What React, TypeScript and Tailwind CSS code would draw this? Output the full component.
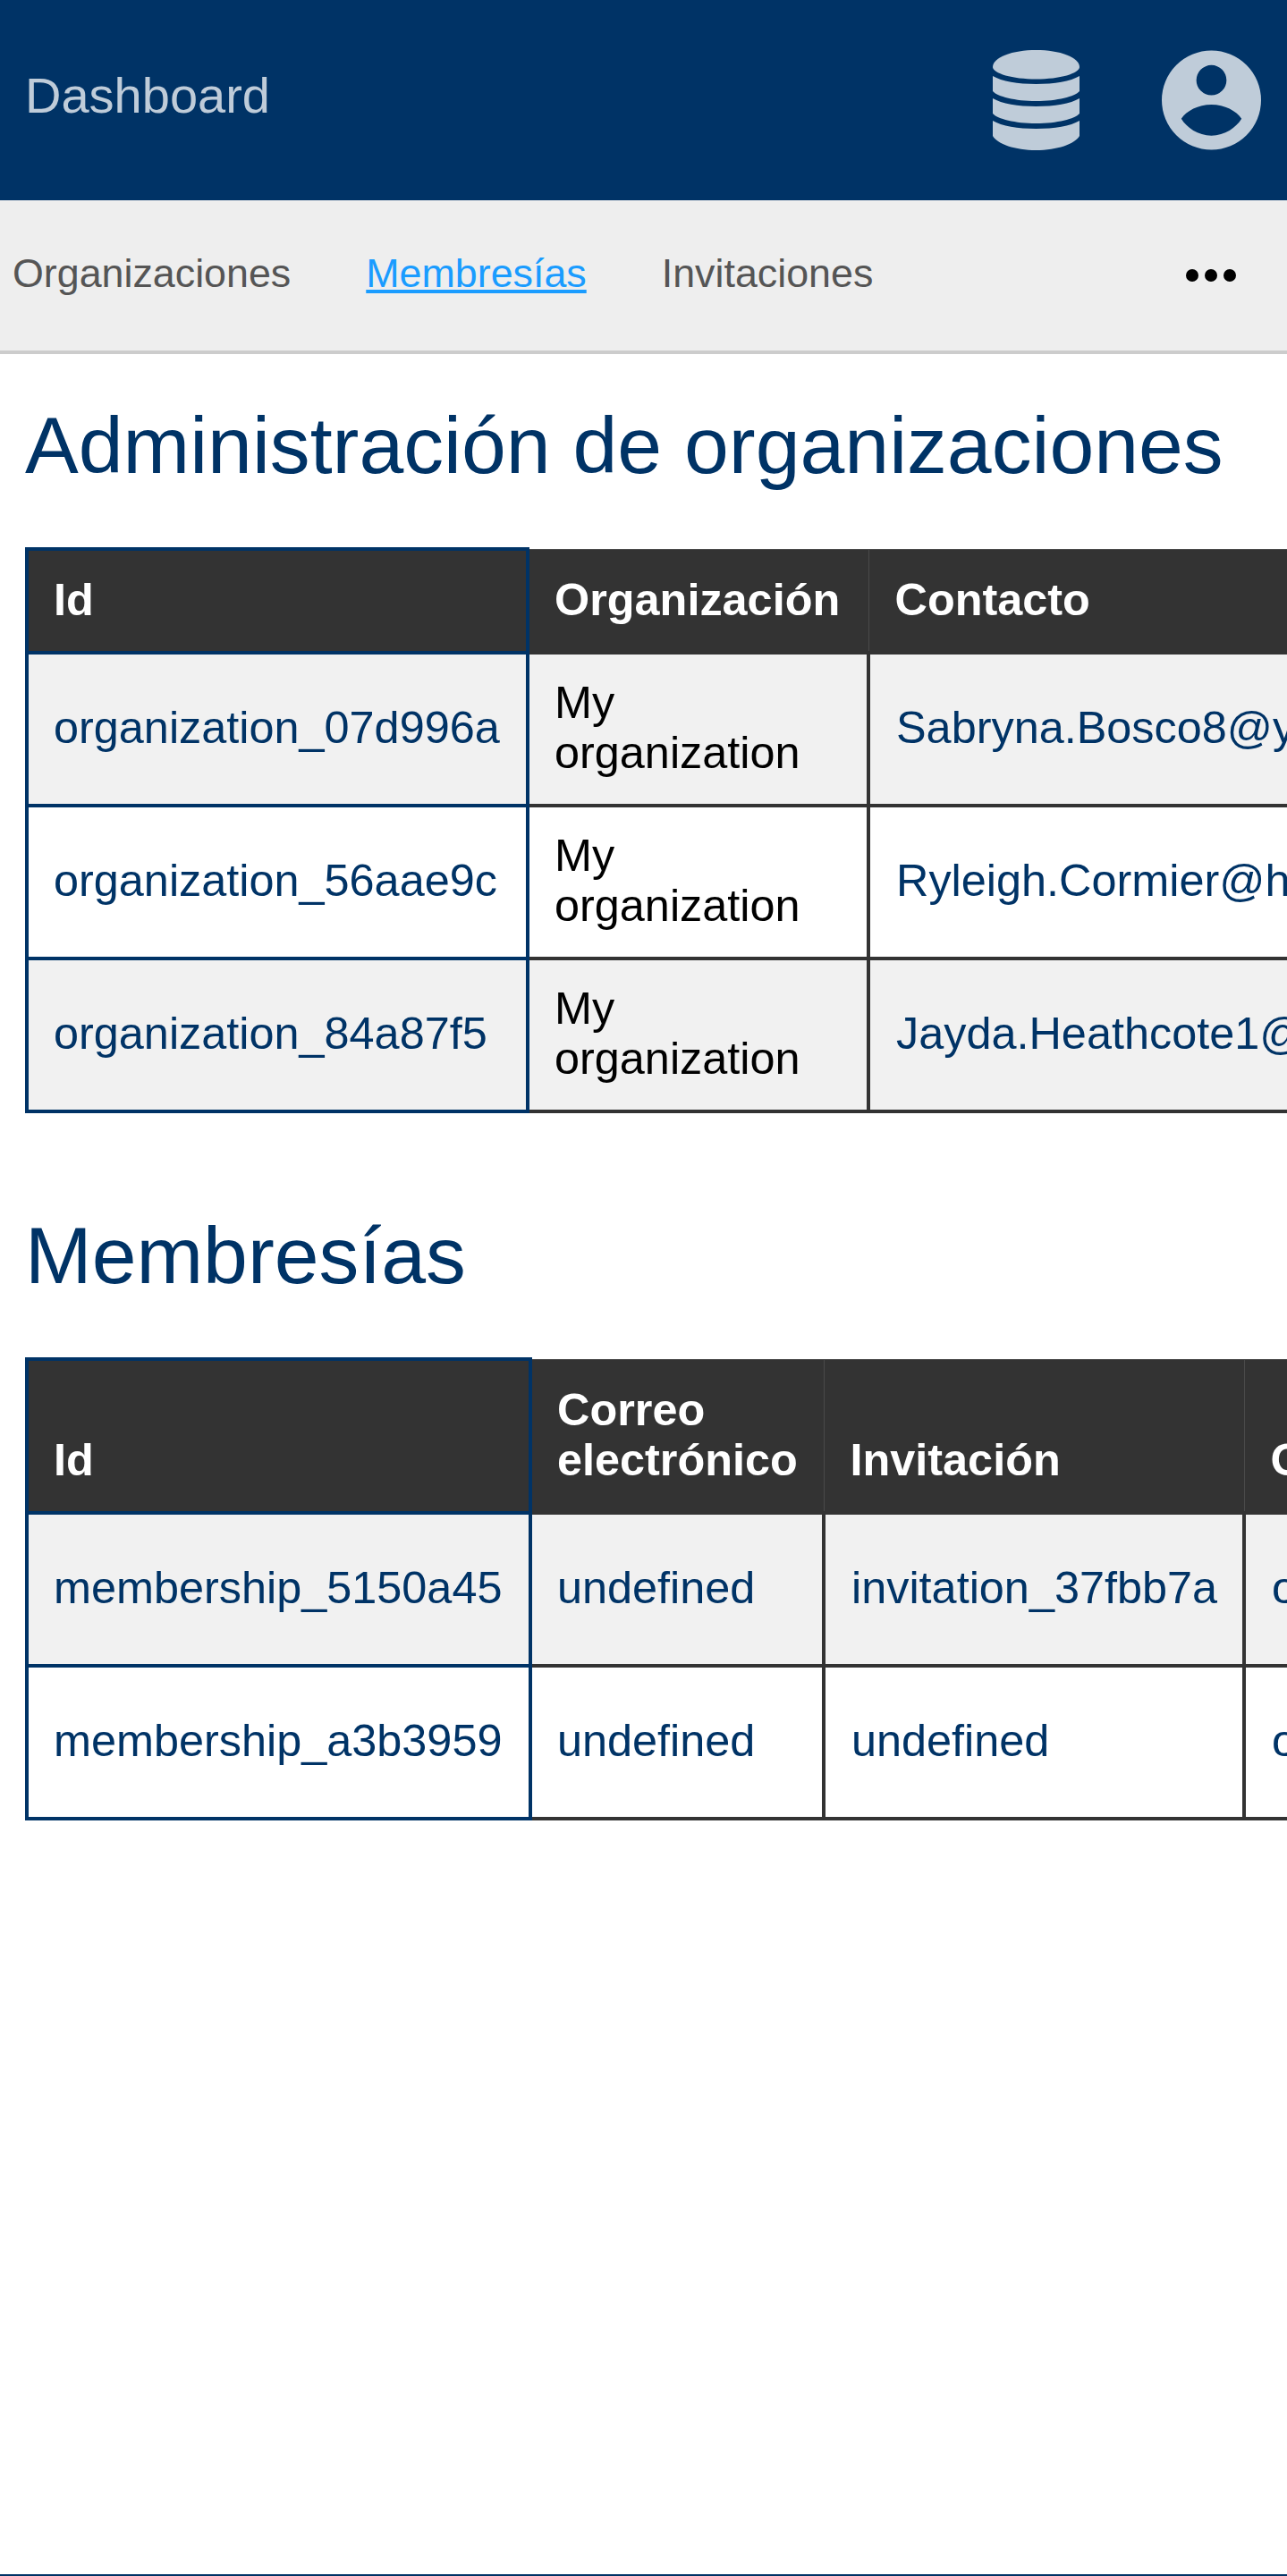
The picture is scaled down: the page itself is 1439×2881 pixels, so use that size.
function DbIcon() {
  return (
    <svg viewBox="0 0 97 112" className="h-[112px] w-[97px]" fill="#bfccd9">
      <path d="M0 19C0 8 22 0 48.5 0S97 8 97 19C97 26 75 32.5 48.5 32.5S0 26 0 19Z" />
      <path d="M0 29C10 35 28 38 48.5 38S87 35 97 29V46C92 52 72 57 48.5 57S5 52 0 46Z" />
      <path d="M0 54C10 60 28 63 48.5 63S87 60 97 54V71C92 77 72 82 48.5 82S5 77 0 71Z" />
      <path d="M0 79C10 85 28 88 48.5 88S87 85 97 79V96C92 105 72 112 48.5 112S5 105 0 96Z" />
    </svg>
  );
}

function UserIcon() {
  return (
    <svg viewBox="0 0 112 112" className="h-[112px] w-[111px]" fill="#bfccd9">
      <path
        fillRule="evenodd"
        d="M56 0a56 56 0 1 0 0 112A56 56 0 0 0 56 0zm0 16.5a17 17 0 1 1 0 34 17 17 0 0 1 0-34zM22 77C28 68 41 61 56 61S84 68 90 77C84 87 71 96 56 96S28 87 22 77Z"
      />
    </svg>
  );
}

function TH({ children, first, tight, w }: { children: React.ReactNode; first?: boolean; tight?: boolean; w: string }) {
  return (
    <th
      className={`${w} ${first ? "border-[4px] border-[#003366]" : "border-[1px] border-[#4a4a4a]"} ${tight ? "px-[28px]" : "px-[29px]"} bg-[#333333] pb-[30px] pt-[6px] text-left align-bottom text-[50.4px] font-bold leading-[55.44px] text-white`}
    >
      {children}
    </th>
  );
}

function TD({ children, first, tight, w, black, bg }: { children: React.ReactNode; first?: boolean; tight?: boolean; w: string; black?: boolean; bg: string }) {
  return (
    <td
      className={`${w} border-[4px] ${first ? "border-[#003366]" : "border-[#333333]"} ${tight ? "px-[28px]" : "px-[29px]"} ${bg} whitespace-normal pb-[30px] pt-[26px] text-left align-middle text-[50.4px] leading-[55.44px] ${black ? "text-black" : "text-[#003366]"}`}
    >
      {children}
    </td>
  );
}

const orgs = [
  ["organization_07d996a", "Sabryna.Bosco8@yahoo.com"],
  ["organization_56aae9c", "Ryleigh.Cormier@hotmail.com"],
  ["organization_84a87f5", "Jayda.Heathcote1@gmail.com"],
];

const mems = [
  ["membership_5150a45", "undefined", "invitation_37fbb7a", "organization_07d996a"],
  ["membership_a3b3959", "undefined", "undefined", "organization_56aae9c"],
];

export default function App() {
  return (
    <div className="flex min-h-[2881px] flex-col border-b-[2px] border-[#003366] bg-white font-['Liberation_Sans',Arial,sans-serif]">
      <header className="flex h-[224px] items-center justify-between bg-[#003366] pl-[28px] pr-[29px]">
        <span className="mb-[10px] text-[56px] leading-none text-[#bfccd9]">Dashboard</span>
        <div className="flex items-center gap-[92px]">
          <DbIcon />
          <UserIcon />
        </div>
      </header>
      <nav className="flex h-[172px] items-center justify-between border-b-[4px] border-[#cccccc] bg-[#eeeeee] pl-[14px] pr-[57px]">
        <div className="flex items-center gap-[84px] pb-[5px] text-[44.8px] leading-none text-[#555555]">
          <span>Organizaciones</span>
          <span className="text-[#1a9cff] underline">Membresías</span>
          <span>Invitaciones</span>
        </div>
        <div className="flex gap-[7px]">
          <span className="size-[14px] rounded-full bg-black" />
          <span className="size-[14px] rounded-full bg-black" />
          <span className="size-[14px] rounded-full bg-black" />
        </div>
      </nav>
      <main className="pl-[28px]">
        <h1 className="mt-[48px] text-[89.6px] font-normal leading-[108px] text-[#003366]">Administración de organizaciones</h1>
        <div className="mt-[60px] overflow-hidden">
          <table className="w-[1700px] table-fixed border-collapse">
            <thead>
              <tr className="h-[116px]">
                <TH first tight w="w-[560px]">Id</TH>
                <TH tight w="w-[381px]">Organización</TH>
                <TH w="w-[759px]">Contacto</TH>
              </tr>
            </thead>
            <tbody>
              {orgs.map((o, i) => (
                <tr key={o[0]} className="h-[171px]">
                  <TD first tight w="w-[560px]" bg={i % 2 === 0 ? "bg-[#f1f1f1]" : "bg-white"}>{o[0]}</TD>
                  <TD black tight w="w-[381px]" bg={i % 2 === 0 ? "bg-[#f1f1f1]" : "bg-white"}>My organization</TD>
                  <TD w="w-[759px]" bg={i % 2 === 0 ? "bg-[#f1f1f1]" : "bg-white"}>{o[1]}</TD>
                </tr>
              ))}
            </tbody>
          </table>
        </div>
        <h2 className="mt-[105px] text-[89.6px] font-normal leading-[108px] text-[#003366]">Membresías</h2>
        <div className="mt-[60px] overflow-hidden">
          <table className="w-[1900px] table-fixed border-collapse">
            <thead>
              <tr className="h-[172px]">
                <TH first tight w="w-[563px]">Id</TH>
                <TH tight w="w-[328px]">Correo electrónico</TH>
                <TH w="w-[470px]">Invitación</TH>
                <TH w="w-[539px]">Organización</TH>
              </tr>
            </thead>
            <tbody>
              {mems.map((m, i) => (
                <tr key={m[0]} className="h-[171px]">
                  <TD first tight w="w-[563px]" bg={i % 2 === 0 ? "bg-[#f1f1f1]" : "bg-white"}>{m[0]}</TD>
                  <TD tight w="w-[328px]" bg={i % 2 === 0 ? "bg-[#f1f1f1]" : "bg-white"}>{m[1]}</TD>
                  <TD w="w-[470px]" bg={i % 2 === 0 ? "bg-[#f1f1f1]" : "bg-white"}>{m[2]}</TD>
                  <TD w="w-[539px]" bg={i % 2 === 0 ? "bg-[#f1f1f1]" : "bg-white"}>{m[3]}</TD>
                </tr>
              ))}
            </tbody>
          </table>
        </div>
      </main>
    </div>
  );
}
